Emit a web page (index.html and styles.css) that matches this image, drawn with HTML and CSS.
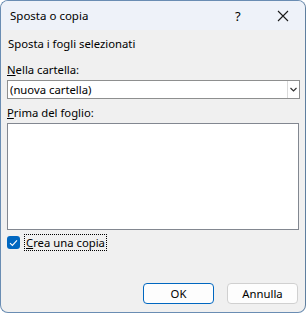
FILE: index.html
```html
<!DOCTYPE html>
<html lang="it">
<head>
  <meta charset="UTF-8" />
  <title>Sposta o copia</title>
  <link rel="stylesheet" href="styles.css">
</head>
<body>
  <div class="window">
    <div class="titlebar">
      <span class="title">Sposta o copia</span>
      <span class="help">?</span>
      <span class="close">
        <svg width="12" height="12" viewBox="0 0 12 12"><path d="M1 1 L11 11 M11 1 L1 11" stroke="#1a1a1a" stroke-width="1.1" /></svg>
      </span>
    </div>

    <div class="content">
      <div class="line intro">Sposta i fogli selezionati</div>

      <div class="line label"><u>N</u>ella cartella:</div>
      <div class="combo">
        <span class="combo-text">(nuova cartella)</span>
        <span class="combo-btn">
          <svg width="7" height="5" viewBox="0 0 7 5"><path d="M0.5 1 L3.5 4 L6.5 1" fill="none" stroke="#333" stroke-width="1.2" /></svg>
        </span>
      </div>

      <div class="line label"><u>P</u>rima del foglio:</div>
      <div class="listbox"></div>

      <div class="check-row">
        <span class="checkbox">
          <svg width="9" height="8" viewBox="0 0 9 8"><path d="M1 4.2 L3.4 6.4 L8 1.4" fill="none" stroke="#fff" stroke-width="1.1" /></svg>
        </span>
        <span class="check-label"><u>C</u>rea una copia</span>
      </div>
    </div>

    <div class="buttons">
      <div class="button default">OK</div>
      <div class="button">Annulla</div>
    </div>
  </div>
</body>
</html>
```

FILE: styles.css
```css
body {
  margin: 0;
  font-family: 'Noto Sans', 'Open Sans', sans-serif;
  font-size: 11.3px;
  color: #000;
  background: #ffffff;
}

.window {
  width: 306px;
  height: 313px;
  box-sizing: border-box;
  border: 1px solid #6a8db3;
  border-right-color: #5f7f9f;
  border-radius: 8px;
  overflow: hidden;
  background: #f0f0f0;
  display: flex;
  flex-direction: column;
}

.titlebar {
  height: 29px;
  background: #eef2f9;
  display: flex;
  align-items: center;
  padding-left: 9px;
  flex-shrink: 0;
}

.title {
  flex: 1;
  font-size: 11.5px;
}

.help {
  width: 14px;
  margin-right: 28px;
  font-size: 13px;
}

.close {
  width: 12px;
  height: 12px;
  margin-right: 16px;
  display: flex;
}

.content {
  padding: 6px 6px 0 6px;
}

.line {
  height: 16px;
  line-height: 16px;
  white-space: nowrap;
}

.intro {
  margin-bottom: 10px;
  padding-left: 1px;
}

.label {
  margin-bottom: 2px;
}

.combo {
  height: 19px;
  box-sizing: border-box;
  border: 1px solid #8e8f8f;
  background: #fff;
  display: flex;
  align-items: center;
  margin-bottom: 6px;
  margin-right: -1px;
}

.combo-text {
  flex: 1;
  padding-left: 2px;
}

.combo-btn {
  width: 11px;
  height: 17px;
  border-left: 1px solid #dadada;
  display: flex;
  align-items: center;
  justify-content: center;
}

.listbox {
  height: 107px;
  box-sizing: border-box;
  border: 1px solid #828790;
  background: #fff;
  margin-bottom: 4px;
}

.check-row {
  display: flex;
  align-items: center;
  gap: 4px;
}

.checkbox {
  width: 13px;
  height: 13px;
  border-radius: 3px;
  background: #0067c0;
  display: flex;
  align-items: center;
  justify-content: center;
}

.check-label {
  border: 1px dotted #000;
  padding: 0 1px;
  line-height: 15px;
}

.buttons {
  margin-top: auto;
  display: flex;
  justify-content: flex-end;
  gap: 13px;
  padding: 0 7px 8px 0;
}

.button {
  width: 71px;
  height: 21px;
  box-sizing: border-box;
  border: 1px solid #d0d0d0;
  border-radius: 4px;
  background: #fdfdfd;
  text-align: center;
  line-height: 19px;
}

.button.default {
  border-color: #0067c0;
}
```
